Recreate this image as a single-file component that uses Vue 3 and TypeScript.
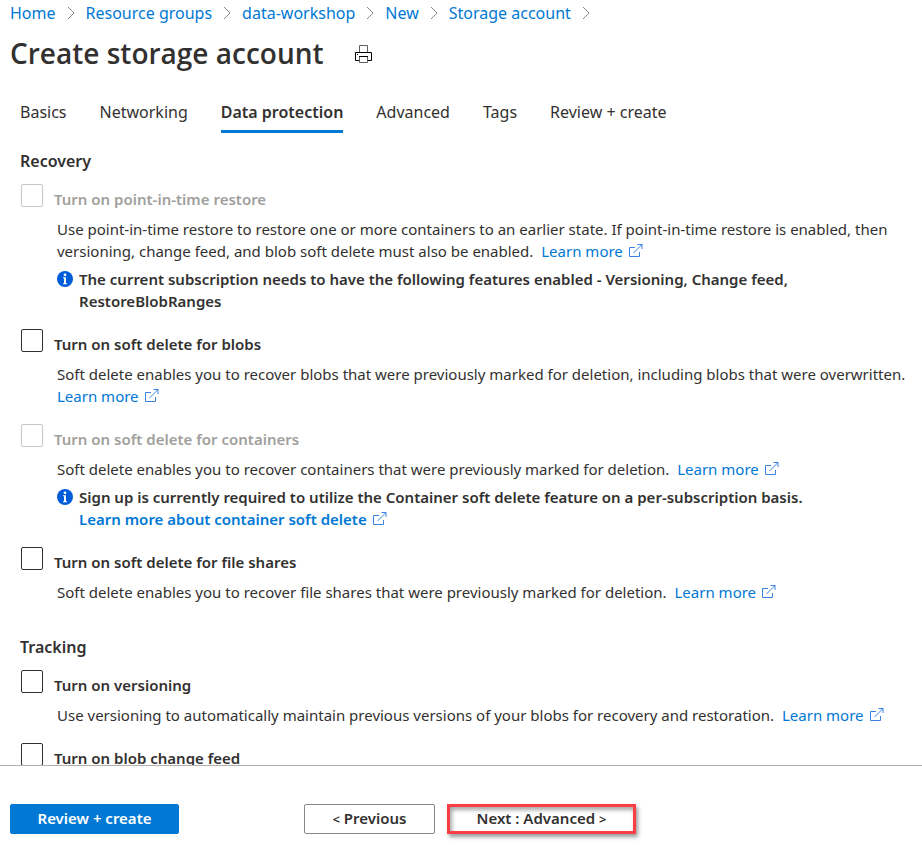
<script setup lang="ts">
import { ref } from 'vue'

interface Note {
  text: string
  link?: string
}

interface Option {
  id: string
  title: string
  description?: string
  disabled?: boolean
  note?: Note
}

interface Section {
  heading: string
  options: Option[]
}

const crumbs = ['Home', 'Resource groups', 'data-workshop', 'New', 'Storage account']

const tabs = ['Basics', 'Networking', 'Data protection', 'Advanced', 'Tags', 'Review + create']
const activeTab = ref('Data protection')

const selected = ref<string[]>([])

const sections: Section[] = [
  {
    heading: 'Recovery',
    options: [
      {
        id: 'point-in-time',
        title: 'Turn on point-in-time restore',
        disabled: true,
        description:
          'Use point-in-time restore to restore one or more containers to an earlier state. If point-in-time restore is enabled, then versioning, change feed, and blob soft delete must also be enabled.',
        note: {
          text: 'The current subscription needs to have the following features enabled - Versioning, Change feed, RestoreBlobRanges',
        },
      },
      {
        id: 'soft-delete-blobs',
        title: 'Turn on soft delete for blobs',
        description:
          'Soft delete enables you to recover blobs that were previously marked for deletion, including blobs that were overwritten.',
      },
      {
        id: 'soft-delete-containers',
        title: 'Turn on soft delete for containers',
        disabled: true,
        description:
          'Soft delete enables you to recover containers that were previously marked for deletion.',
        note: {
          text: 'Sign up is currently required to utilize the Container soft delete feature on a per-subscription basis.',
          link: 'Learn more about container soft delete',
        },
      },
      {
        id: 'soft-delete-files',
        title: 'Turn on soft delete for file shares',
        description:
          'Soft delete enables you to recover file shares that were previously marked for deletion.',
      },
    ],
  },
  {
    heading: 'Tracking',
    options: [
      {
        id: 'versioning',
        title: 'Turn on versioning',
        description:
          'Use versioning to automatically maintain previous versions of your blobs for recovery and restoration.',
      },
      { id: 'change-feed', title: 'Turn on blob change feed' },
    ],
  },
]
</script>

<template>
  <div class="page">
    <header class="header">
      <nav class="crumbs" aria-label="Breadcrumb">
        <template v-for="crumb in crumbs" :key="crumb">
          <a href="#">{{ crumb }}</a>
          <svg class="chevron" viewBox="0 0 8 14" aria-hidden="true">
            <path d="M1 1l6 6-6 6" />
          </svg>
        </template>
      </nav>
      <div class="title-row">
        <h1>Create storage account</h1>
        <button class="print" type="button" aria-label="Print">
          <svg viewBox="0 0 18 18" aria-hidden="true">
            <path class="soft" d="M4.5 7V.5h8V7" />
            <path d="M4 15.5H.5v-8h16v8H13" />
            <path class="soft" d="M4.5 12v5.5h8V12" />
            <path d="M4 11.5h9" />
            <path d="M2 9.5h1" />
          </svg>
        </button>
      </div>
      <nav class="tabs" aria-label="Steps">
        <button
          v-for="tab in tabs"
          :key="tab"
          type="button"
          :class="['tab', { active: tab === activeTab }]"
          @click="activeTab = tab"
        >
          {{ tab }}
        </button>
      </nav>
    </header>

    <main class="content">
      <section v-for="section in sections" :key="section.heading" class="section">
        <h2>{{ section.heading }}</h2>
        <div class="options">
          <div v-for="option in section.options" :key="option.id" class="option">
            <div :class="['check', { disabled: option.disabled }]">
              <input
                :id="option.id"
                v-model="selected"
                type="checkbox"
                :value="option.id"
                :disabled="option.disabled"
              />
              <label :for="option.id">{{ option.title }}</label>
            </div>
            <p v-if="option.description" class="description">
              <span class="copy">{{ option.description }}</span>
              {{ ' ' }}
              <a href="#"
                >Learn more<svg class="external" viewBox="0 0 14 14" aria-hidden="true">
                  <path d="M6 3.5H.5v9h10V8" />
                  <path d="M4.5 9L13 .5M8.5 .5H13V5" /></svg
              ></a>
            </p>
            <div v-if="option.note" class="note">
              <svg class="info" viewBox="0 0 16 16" aria-hidden="true">
                <circle class="disc" cx="8" cy="8" r="8" />
                <circle class="mark" cx="8" cy="3.8" r="1.4" />
                <path class="mark" d="M6 6.2h3v6h1v1H6v-1h1v-5H6z" />
              </svg>
              <p>
                {{ option.note.text }}
                <a v-if="option.note.link" href="#"
                  >{{ option.note.link
                  }}<svg class="external" viewBox="0 0 14 14" aria-hidden="true">
                    <path d="M6 3.5H.5v9h10V8" />
                    <path d="M4.5 9L13 .5M8.5 .5H13V5" /></svg
                ></a>
              </p>
            </div>
          </div>
        </div>
      </section>
    </main>

    <footer class="footer">
      <button class="btn primary" type="button">Review + create</button>
      <div class="pager">
        <button class="btn" type="button"><span class="arrow">&lt;</span> Previous</button>
        <button class="btn next" type="button">Next : Advanced <span class="arrow">&gt;</span></button>
      </div>
    </footer>
  </div>
</template>

<style>
body {
  background: #fff;
}
</style>

<style scoped>
.page {
  display: flex;
  flex-direction: column;
  height: 100vh;
  overflow: hidden;
  color: #323130;
  font-family: 'Segoe UI', 'Noto Sans', 'Open Sans', sans-serif;
  font-size: 15px;
  line-height: 22px;
}

h1,
h2,
p {
  margin: 0;
}

button {
  font: inherit;
  color: inherit;
}

a {
  color: #0078d4;
  text-decoration: none;
}

.header {
  flex: none;
}

.crumbs {
  display: flex;
  align-items: center;
  gap: 11px;
  padding: 2px 10px 0;
  font-size: 16px;
}

.chevron {
  width: 8px;
  height: 14px;
  fill: none;
  stroke: #8a8886;
}

.title-row {
  display: flex;
  align-items: center;
  gap: 31px;
  padding: 10px 10px 0;
}

h1 {
  font-family: 'Segoe UI', 'Open Sans', sans-serif;
  font-size: 28px;
  line-height: 38px;
  font-weight: 600;
}

.print {
  display: flex;
  padding: 2px 0 0;
  border: 0;
  background: none;
}

.print svg {
  width: 18px;
  height: 18px;
  fill: none;
  stroke: #000;
}

.print .soft {
  stroke: #605e5c;
}

.tabs {
  display: flex;
  gap: 33px;
  padding: 29px 20px 0;
}

.tab {
  padding: 0 0 7px;
  border: 0;
  border-bottom: 3px solid transparent;
  background: none;
  font-size: 16px;
}

.tab.active {
  border-color: #0078d4;
  font-weight: 600;
}

.content {
  flex: 1;
  min-height: 0;
  overflow: hidden;
  padding: 17px 0 0 20px;
}

.section + .section {
  margin-top: 33px;
}

h2 {
  margin-bottom: 12px;
  font-size: 16px;
  line-height: 22px;
  font-weight: 600;
}

.options {
  display: flex;
  flex-direction: column;
  gap: 17px;
}

.check {
  display: flex;
  gap: 11px;
  padding-left: 1px;
}

.check input {
  appearance: none;
  flex: none;
  width: 22px;
  height: 23px;
  margin: 0;
  border: 1px solid #323130;
  border-radius: 2px;
  background: #fff;
}

.check input:checked {
  background: #0078d4;
}

.check label {
  padding-top: 4px;
  font-weight: 600;
}

.check.disabled input {
  border-color: #c8c6c4;
}

.check.disabled label {
  color: #a19f9d;
}

.description {
  margin: 8px 0 0 37px;
}

.copy {
  margin-right: 4px;
}

.description a,
.note a {
  display: inline-block;
}

.external {
  width: 14px;
  height: 14px;
  margin-left: 6px;
  vertical-align: -1px;
  fill: none;
  stroke: #3b82e0;
}

.note {
  display: flex;
  gap: 6px;
  margin: 6px 0 0 37px;
  font-weight: 600;
}

.info {
  flex: none;
  width: 16px;
  height: 16px;
  margin-top: 3px;
}

.disc {
  fill: #015cda;
}

.mark {
  fill: #fff;
}

.footer {
  display: flex;
  flex: none;
  gap: 125px;
  padding: 38px 10px 13px;
  border-top: 1px solid #b3b0ad;
}

.pager {
  display: flex;
  gap: 12px;
}

.btn {
  min-width: 131px;
  height: 30px;
  padding: 0 24px 2px;
  border: 1px solid #8a8886;
  border-radius: 2px;
  background: #fff;
  font-weight: 600;
  line-height: 20px;
}

.arrow {
  font-size: 13px;
}

.primary {
  min-width: 169px;
  border-color: #0078d4;
  background: #0078d4;
  color: #fff;
}

.next {
  min-width: 189px;
  border: 3px solid #fa3e44;
  border-radius: 0;
  box-shadow:
    2px 3px 4px rgba(0, 0, 0, 0.4),
    inset 2px 3px 4px rgba(0, 0, 0, 0.35);
}
</style>
